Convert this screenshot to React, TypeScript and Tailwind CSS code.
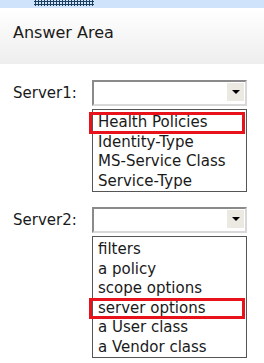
import React from "react";

function Select() {
  return (
    <div className="relative w-[155px] h-[26px] bg-white border-2 border-t-[#8a8a8a] border-l-[#8a8a8a] border-r-[#d8d8d8] border-b-[#d8d8d8]">
      <div className="absolute right-[1px] top-[1px] w-[17px] h-[18px] bg-[#ebe9e2] flex items-center justify-center">
        <div className="w-0 h-0 border-l-[4px] border-r-[4px] border-t-[4px] border-l-transparent border-r-transparent border-t-black" />
      </div>
    </div>
  );
}

function List({ items, marked }: { items: string[]; marked: number }) {
  return (
    <div className="relative mt-[3px] w-[155px] border border-[#555] bg-white pt-[3px] pb-[0px]">
      {items.map((item, i) => (
        <div key={item} className="relative pl-[5px] h-[19.5px] leading-[19.5px] text-[15px] text-[#1a1a1a]">
          {i === marked && (
            <div className="absolute left-[-4px] right-[1px] top-[-1px] bottom-[-1px] border-[3px] border-[#e8121a]" />
          )}
          <span className="relative">{item}</span>
        </div>
      ))}
    </div>
  );
}

function Row({ label, items, marked }: { label: string; items: string[]; marked: number }) {
  return (
    <div className="flex">
      <div className="w-[92px] pl-[13px] pt-[2px] text-[15px] text-[#1a1a1a]">{label}</div>
      <div>
        <Select />
        <List items={items} marked={marked} />
      </div>
    </div>
  );
}

export default function App() {
  return (
    <div className="w-[264px] h-[363px] overflow-hidden bg-white font-['DejaVu_Sans',Verdana,sans-serif]">
      <div className="h-[8px] bg-[#cfe3fb] pl-[34px]">
        <div className="w-[60px] h-[6px] bg-[radial-gradient(#1d3f60_55%,transparent_60%)] bg-[length:3px_3px]" />
      </div>
      <div className="h-[56px] bg-gradient-to-b from-white to-[#eeeeee] pl-[13px] pt-[13px] text-[16px] text-[#1a1a1a]">
        Answer Area
      </div>
      <div className="pt-[16px] flex flex-col gap-[15px]">
        <Row
          label="Server1:"
          marked={0}
          items={["Health Policies", "Identity-Type", "MS-Service Class", "Service-Type"]}
        />
        <Row
          label="Server2:"
          marked={3}
          items={["filters", "a policy", "scope options", "server options", "a User class", "a Vendor class"]}
        />
      </div>
    </div>
  );
}
